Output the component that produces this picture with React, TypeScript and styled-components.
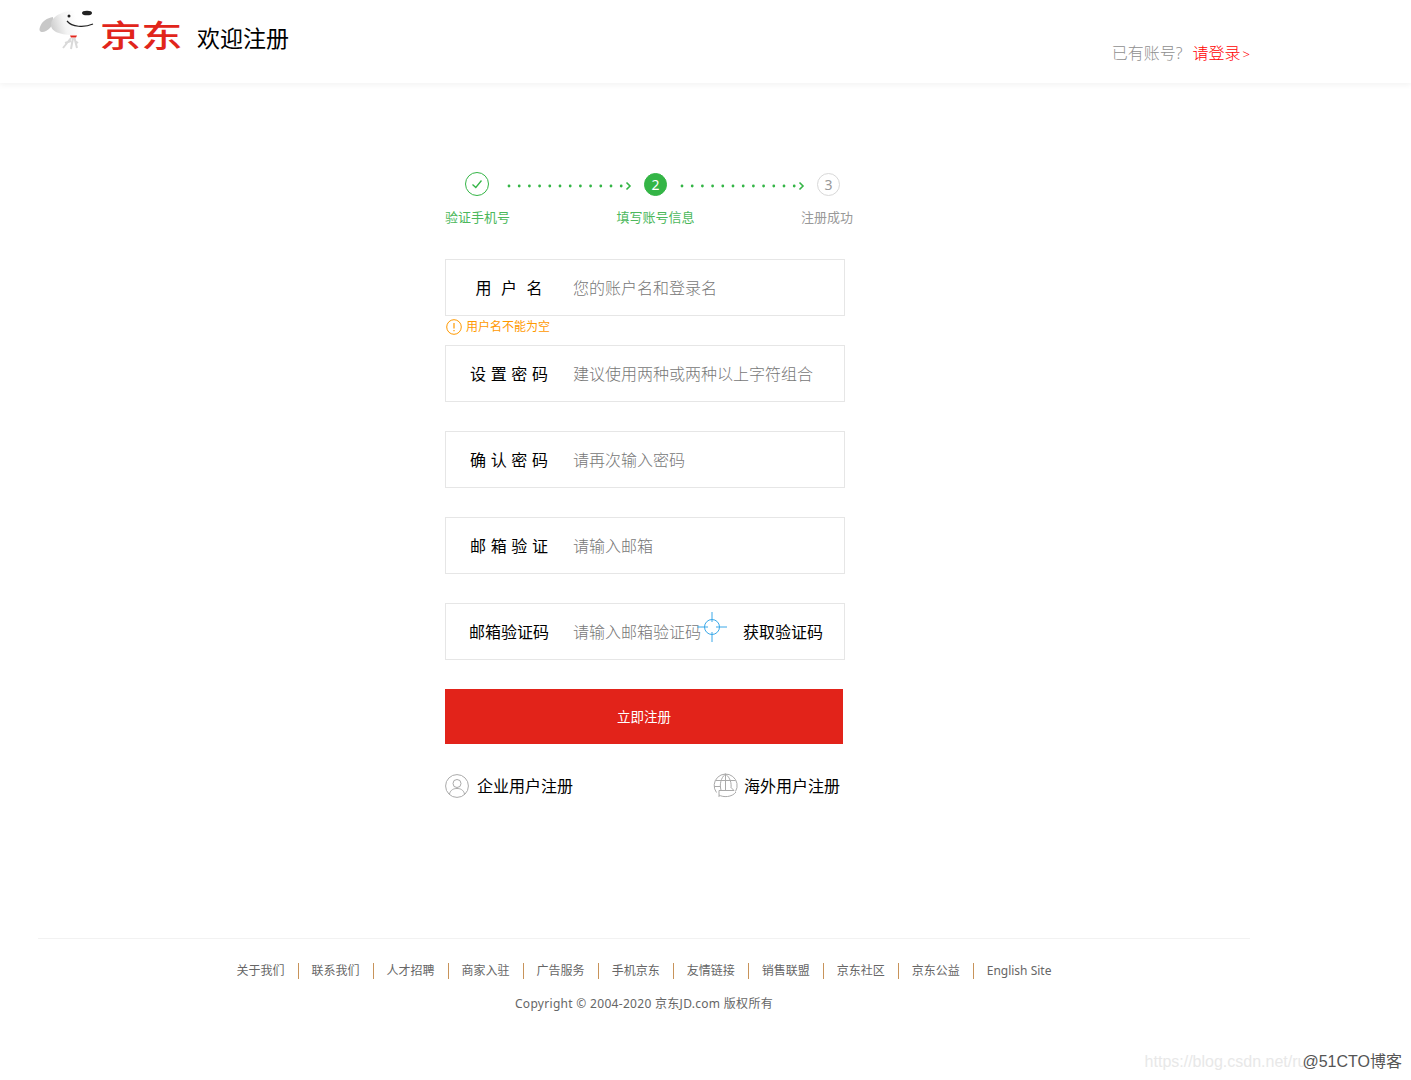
import styled, { createGlobalStyle } from "styled-components";

const GlobalStyle = createGlobalStyle`
  html, body {
    margin: 0;
    padding: 0;
    background: #fff;
    font-family: "Noto Sans", "Noto Sans CJK SC", sans-serif;
    font-weight: 300;
  }
`;

const Page = styled.div`
  position: relative;
  height: 1080px;
  overflow: hidden;
  display: flex;
  flex-direction: column;
`;

const Header = styled.header`
  height: 83px;
  flex: none;
  box-shadow: 0 2px 6px rgba(0, 0, 0, 0.05);
`;

const HeaderInner = styled.div`
  width: 1290px;
  height: 100%;
  box-sizing: border-box;
  padding: 0 40px 0 36px;
  display: flex;
  justify-content: space-between;
`;

const Brand = styled.div`
  display: flex;
  align-items: flex-start;
`;

const DogLogo = styled.svg`
  width: 60px;
  height: 44px;
  margin-top: 8px;
`;

const LogoWord = styled.span`
  width: 80px;
  margin: 11px 0 0 4px;
  font-size: 40px;
  line-height: 50px;
  font-weight: 500;
  color: #e1251b;
  transform: scale(1.03, 0.76);
  transform-origin: left center;
`;

const WelcomeTitle = styled.h1`
  margin: 20px 0 0 17px;
  font-size: 23px;
  line-height: 36px;
  font-weight: 400;
  color: #000;
`;

const LoginHint = styled.div`
  align-self: flex-end;
  padding-bottom: 17px;
  font-size: 16px;
  line-height: 24px;
  color: #8f8f8f;
  white-space: nowrap;
`;

const LoginLink = styled.a`
  margin-left: 10px;
  color: #f00;
`;

const LoginArrow = styled.span`
  margin-left: 2px;
  font-size: 13px;
`;

const Main = styled.main`
  width: 400px;
  margin-left: 445px;
  padding-top: 90px;
  flex: none;
`;

const StepTrack = styled.div`
  display: flex;
  align-items: flex-start;
  padding-left: 20px;
  height: 23px;
`;

const StepCircle = styled.span<{ $state: "done" | "active" | "todo" }>`
  width: ${(p) => (p.$state === "done" ? 24 : 23)}px;
  height: ${(p) => (p.$state === "done" ? 24 : 23)}px;
  margin-top: ${(p) => (p.$state === "done" ? -1 : 0)}px;
  padding-bottom: 1px;
  flex: none;
  box-sizing: border-box;
  border-radius: 50%;
  display: flex;
  align-items: center;
  justify-content: center;
  font-size: 14px;
  font-weight: 400;
  border: ${(p) =>
    p.$state === "todo"
      ? "1px solid #d8d8d8"
      : p.$state === "done"
        ? "1.5px solid #34b546"
        : "1px solid #34b546"};
  background: ${(p) => (p.$state === "active" ? "#34b546" : "#fff")};
  color: ${(p) => (p.$state === "active" ? "#fff" : "#999")};
`;

const Connector = styled.svg<{ $lead: number }>`
  width: 125px;
  height: 10px;
  flex: none;
  margin: 8px 12px 0 ${(p) => p.$lead}px;
`;

const StepLabels = styled.div`
  display: flex;
  gap: 106.5px;
  margin-top: 12px;
  height: 51px;
`;

const StepLabel = styled.span<{ $done?: boolean }>`
  font-size: 13px;
  line-height: 18px;
  white-space: nowrap;
  font-weight: 400;
  color: ${(p) => (p.$done ? "#4cb85c" : "#999")};
`;

const FieldGroup = styled.div`
  height: 86px;
`;

const FieldBox = styled.div`
  position: relative;
  height: 57px;
  box-sizing: border-box;
  border: 1px solid #e6e6e6;
  display: flex;
  align-items: center;
`;

const FieldLabel = styled.label`
  width: 126px;
  flex: none;
  display: flex;
  justify-content: center;
  margin-bottom: 2px;
  font-size: 16px;
  font-weight: 400;
  color: #000;
`;

const LabelText = styled.span<{ $spacing: number }>`
  letter-spacing: ${(p) => p.$spacing}px;
  margin-right: -${(p) => p.$spacing}px;
  white-space: nowrap;
`;

const FieldInput = styled.input`
  flex: 1;
  min-width: 0;
  margin: 0 0 0 1px;
  padding: 0;
  border: none;
  outline: none;
  background: transparent;
  font-family: inherit;
  font-weight: 300;
  font-size: 16px;
  color: #333;

  &::placeholder {
    color: #777;
    opacity: 1;
  }
`;

const CodeButton = styled.button`
  flex: none;
  margin: 0 21px 2px 0;
  padding: 0;
  border: none;
  background: transparent;
  font-family: inherit;
  font-size: 16px;
  font-weight: 400;
  color: #000;
`;

const Crosshair = styled.svg`
  position: absolute;
  left: 251px;
  top: 8px;
  width: 30px;
  height: 30px;
`;

const ErrorRow = styled.div`
  display: flex;
  align-items: center;
  gap: 4px;
  margin: 3px 0 0 1px;
  font-size: 12px;
  line-height: 16px;
  font-weight: 400;
  color: #f90;
`;

const SubmitButton = styled.button`
  display: block;
  width: 398px;
  height: 55px;
  padding: 0 0 2px;
  border: none;
  background: #e2231a;
  color: #fff;
  font-family: inherit;
  font-size: 13.5px;
  font-weight: 400;
`;

const AltLinks = styled.div`
  display: flex;
  justify-content: space-between;
  margin-top: 27px;
  padding-right: 5px;
`;

const AltLink = styled.a<{ $gap: number }>`
  display: flex;
  align-items: center;
  gap: ${(p) => p.$gap}px;
  font-size: 16px;
  font-weight: 400;
  color: #000;
`;

const AltIcon = styled.svg`
  flex: none;
  margin-top: 2px;
`;

const Footer = styled.footer`
  width: 1212px;
  margin: 140px 0 0 38px;
  border-top: 1px solid #f2f2f2;
  padding-top: 24px;
`;

const FooterLinks = styled.ul`
  display: flex;
  justify-content: center;
  margin: 0;
  padding: 0;
  list-style: none;
`;

const FooterItem = styled.li<{ $last?: boolean }>`
  padding: 0 13px;
  font-size: 12px;
  line-height: 16px;
  color: #666;
  font-weight: 400;
  border-right: ${(p) => (p.$last ? "none" : "1px solid #c8935a")};
`;

const Copyright = styled.p`
  margin: 17px 0 0;
  text-align: center;
  font-size: 12px;
  line-height: 16px;
  letter-spacing: 0.3px;
  color: #666;
  font-weight: 400;
`;

const Watermark = styled.div`
  position: absolute;
  right: 9px;
  bottom: 7px;
  display: flex;
  align-items: center;
  font-family: "Liberation Sans", "Noto Sans CJK SC", sans-serif;
  font-size: 16px;
  font-weight: 400;
  line-height: 22px;
  white-space: nowrap;
`;

const WatermarkFaint = styled.span`
  margin-right: -4px;
  color: #e8e8e8;
`;

const WatermarkStrong = styled.span`
  position: relative;
  color: #555;
`;

const fields = [
  { label: "用户名", spacing: 9.5, placeholder: "您的账户名和登录名", error: "用户名不能为空" },
  { label: "设置密码", spacing: 4.67, placeholder: "建议使用两种或两种以上字符组合" },
  { label: "确认密码", spacing: 4.67, placeholder: "请再次输入密码" },
  { label: "邮箱验证", spacing: 4.67, placeholder: "请输入邮箱" },
  { label: "邮箱验证码", spacing: 0, placeholder: "请输入邮箱验证码", code: true },
];

const footerLinks = [
  "关于我们",
  "联系我们",
  "人才招聘",
  "商家入驻",
  "广告服务",
  "手机京东",
  "友情链接",
  "销售联盟",
  "京东社区",
  "京东公益",
  "English Site",
];

function Dots({ lead }: { lead: number }) {
  return (
    <Connector $lead={lead} viewBox="0 0 125 10">
      <line x1="2" y1="5" x2="115" y2="5" stroke="#34b546" strokeWidth="2.8" strokeLinecap="round" strokeDasharray="0 10.2" />
      <path d="M119.5 1.5 L123 5 L119.5 8.5" fill="none" stroke="#34b546" strokeWidth="1.6" />
    </Connector>
  );
}

export default function App() {
  return (
    <Page>
      <GlobalStyle />
      <Header>
        <HeaderInner>
          <Brand>
            <DogLogo viewBox="36 8 60 44">
              <defs>
                <linearGradient id="dogHead" x1="0" y1="0.6" x2="0.6" y2="0.5">
                  <stop offset="0" stopColor="#cfcfcf" />
                  <stop offset="0.5" stopColor="#f4f4f4" />
                  <stop offset="1" stopColor="#ffffff" />
                </linearGradient>
              </defs>
              <path d="M53 17 C47 18 42 21 40 27 C38 32 42 33 46 31 C50 29 52 26 53 22Z" fill="#c8c8c8" />
              <path d="M51 24 C52 15 66 10 78 10 C88 10 96 14 96 20 C96 28 84 35 72 35 C60 35 50 31 51 24Z" fill="url(#dogHead)" />
              <circle cx="69" cy="16" r="1.5" fill="#222" />
              <ellipse cx="87" cy="13" rx="5" ry="2.3" fill="#222" />
              <path d="M67 21 C72 27 84 28 93 24" fill="none" stroke="#222" strokeWidth="1.2" />
              <path d="M70 35.5 L77 35.5 L76 37.5 L71 37.5Z" fill="#e1251b" />
              <path d="M71 38 L63 48 M73 38 L71 49 M74.5 38 L77 48 M71 41 L65 43 M75 41 L78 43" stroke="#d9d9d9" strokeWidth="2" fill="none" />
            </DogLogo>
            <LogoWord>京东</LogoWord>
            <WelcomeTitle>欢迎注册</WelcomeTitle>
          </Brand>
          <LoginHint>
            已有账号?
            <LoginLink>
              请登录<LoginArrow>&gt;</LoginArrow>
            </LoginLink>
          </LoginHint>
        </HeaderInner>
      </Header>

      <Main>
        <StepTrack>
          <StepCircle $state="done">
            <svg width="12" height="12" viewBox="0 0 12 12">
              <path d="M1.5 6.5 L4.8 9.5 L10.5 2.5" fill="none" stroke="#34b546" strokeWidth="1.3" />
            </svg>
          </StepCircle>
          <Dots lead={18} />
          <StepCircle $state="active">2</StepCircle>
          <Dots lead={13} />
          <StepCircle $state="todo">3</StepCircle>
        </StepTrack>
        <StepLabels>
          <StepLabel $done>验证手机号</StepLabel>
          <StepLabel $done>填写账号信息</StepLabel>
          <StepLabel>注册成功</StepLabel>
        </StepLabels>

        {fields.map((f) => (
          <FieldGroup key={f.label}>
            <FieldBox>
              <FieldLabel>
                <LabelText $spacing={f.spacing}>{f.label}</LabelText>
              </FieldLabel>
              <FieldInput placeholder={f.placeholder} />
              {f.code && (
                <>
                  <CodeButton>获取验证码</CodeButton>
                  <Crosshair viewBox="0 0 30 30">
                    <circle cx="15" cy="15" r="7.5" fill="none" stroke="#3aa8e8" strokeWidth="1" />
                    <path d="M15 0 V10 M15 20 V30 M0 15 H11 M19 15 H30" stroke="#3aa8e8" strokeWidth="1" />
                  </Crosshair>
                </>
              )}
            </FieldBox>
            {f.error && (
              <ErrorRow>
                <svg width="16" height="16" viewBox="0 0 16 16">
                  <circle cx="8" cy="8" r="7.3" fill="none" stroke="#f90" strokeWidth="1" />
                  <path d="M8 4 V9.5 M8 11 V12.2" stroke="#f90" strokeWidth="1.2" />
                </svg>
                {f.error}
              </ErrorRow>
            )}
          </FieldGroup>
        ))}

        <SubmitButton>立即注册</SubmitButton>

        <AltLinks>
          <AltLink $gap={8}>
            <AltIcon width="24" height="24" viewBox="0 0 24 24">
              <circle cx="12" cy="12" r="11.4" fill="none" stroke="#aaa" strokeWidth="1" />
              <circle cx="12" cy="9.5" r="4" fill="none" stroke="#aaa" strokeWidth="1" />
              <path d="M4.5 20 C5.5 15.5 9 14.5 12 14.5 C15 14.5 18.5 15.5 19.5 20" fill="none" stroke="#aaa" strokeWidth="1" />
            </AltIcon>
            企业用户注册
          </AltLink>
          <AltLink $gap={6}>
            <AltIcon width="25" height="25" viewBox="0 0 25 25">
              <path d="M3.5 19.5 A11.5 11.5 0 1 1 22.5 18.5" fill="none" stroke="#aaa" strokeWidth="1" />
              <path d="M12.5 1 C7.5 5 6.5 12 8 17 M12.5 1 C17.5 5 18.5 10 18 15 M12.5 1 V17 M2.5 7.5 H22.5 M1.2 13.5 H7" fill="none" stroke="#aaa" strokeWidth="1" />
              <path d="M6 24 L6 17.5 L21 17.5 M6 22 C10 24.5 19 24.5 23 19 M21 17.5 L18.5 15" fill="none" stroke="#aaa" strokeWidth="1" />
            </AltIcon>
            海外用户注册
          </AltLink>
        </AltLinks>
      </Main>

      <Footer>
        <FooterLinks>
          {footerLinks.map((name, i) => (
            <FooterItem key={name} $last={i === footerLinks.length - 1}>
              {name}
            </FooterItem>
          ))}
        </FooterLinks>
        <Copyright>Copyright © 2004-2020 京东JD.com 版权所有</Copyright>
      </Footer>

      <Watermark>
        <WatermarkFaint>https://blog.csdn.net/ru</WatermarkFaint>
        <WatermarkStrong>@51CTO博客</WatermarkStrong>
      </Watermark>
    </Page>
  );
}
